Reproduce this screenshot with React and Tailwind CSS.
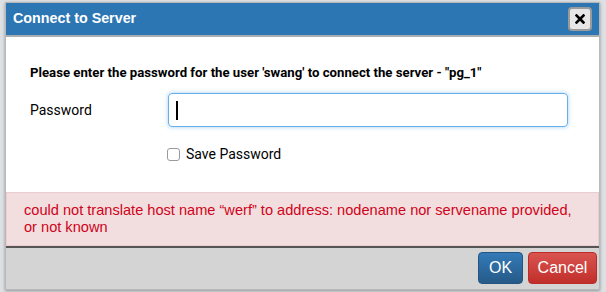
import React from 'react';

const App = () => {
  return (
    <div className="w-[606px] h-[292px] bg-[#dde1e4] pl-[5px] pt-[2px] overflow-hidden">
      <div className="w-[595px] h-[288px] bg-white border border-[#b9b9b9] shadow-[0_1px_3px_rgba(0,0,0,0.35)] flex flex-col">
        {/* header */}
        <div className="h-[32px] bg-[#2c76b4] flex items-center justify-between pl-[7px] pr-[7px] shrink-0">
          <span className="text-white font-bold text-[14.3px] font-['Liberation_Sans',Arial,sans-serif]">Connect to Server</span>
          <button className="w-[24px] h-[24px] rounded-[4px] bg-[#e6e6e6] border-2 border-[#9b9b9b] flex items-center justify-center">
            <svg width="10" height="10" viewBox="0 0 10 10">
              <path d="M1.5 1.5 L8.5 8.5 M8.5 1.5 L1.5 8.5" stroke="#000" strokeWidth="2.6" strokeLinecap="square" />
            </svg>
          </button>
        </div>
        <div className="h-[2px] bg-[#a9aeb3] shrink-0" />

        {/* body */}
        <div className="flex-1 flex flex-col font-['Roboto',sans-serif] text-[#222]">
          <p className="pl-[24px] pt-[27px] text-[13.2px] font-bold leading-[18px] text-black">
            Please enter the password for the user 'swang' to connect the server - "pg_1"
          </p>
          <div className="flex items-center mt-[11px] pl-[24px]">
            <label className="w-[138px] text-[14px] text-black">Password</label>
            <div className="w-[400px] h-[34px] rounded-[4px] border border-[#66afe9] shadow-[0_0_4px_rgba(102,175,233,0.6)] flex items-center pl-[7px]">
              <div className="w-[1.5px] h-[19px] bg-black" />
            </div>
          </div>
          <div className="flex items-center mt-[17px] pl-[161px]">
            <div className="w-[13px] h-[13px] rounded-[3px] border border-[#9a9a9a] bg-white" />
            <span className="ml-[6px] text-[14px] text-black">Save Password</span>
          </div>
        </div>

        {/* error */}
        <div className="h-[54px] bg-[#f2dede] border border-[#ebcdd1] pl-[17px] pt-[9px] shrink-0">
          <p className="text-[#d0021b] text-[14.6px] leading-[17px] font-['Liberation_Sans',Arial,sans-serif] whitespace-nowrap">
            could not translate host name “werf” to address: nodename nor servename provided,<br />or not known
          </p>
        </div>

        {/* footer */}
        <div className="h-[2px] bg-[#555] shrink-0" />
        <div className="h-[41px] bg-[#d4d4d4] flex items-start justify-end gap-[5px] pt-[4px] pr-[2px] shrink-0 font-['Liberation_Sans',Arial,sans-serif]">
          <button className="w-[45px] h-[32px] rounded-[4px] border border-[#245580] bg-gradient-to-b from-[#337ab7] to-[#265a88] text-white text-[16px]">OK</button>
          <button className="w-[69px] h-[32px] rounded-[4px] border border-[#b92c28] bg-gradient-to-b from-[#d9534f] to-[#c12e2a] text-white text-[16px]">Cancel</button>
        </div>
      </div>
    </div>
  );
};

export default App;
